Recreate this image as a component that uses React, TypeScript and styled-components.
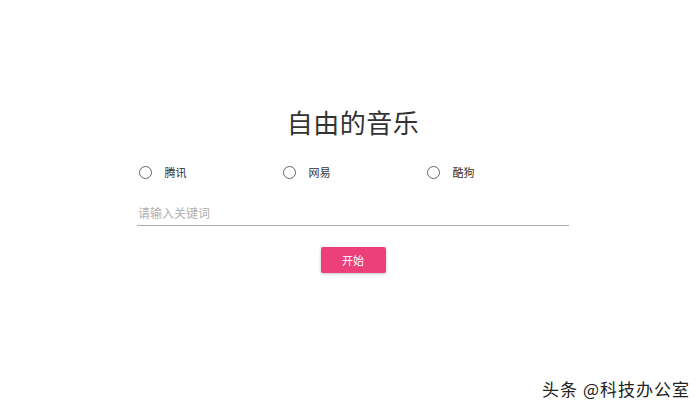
import React from 'react';
import styled, { createGlobalStyle } from 'styled-components';

const sources = ['腾讯', '网易', '酷狗'];

const GlobalStyle = createGlobalStyle`
  html, body {
    margin: 0;
    padding: 0;
    background: #fff;
    font-family: "Noto Sans CJK SC", "Liberation Sans", sans-serif;
  }
`;

const SPage = styled.div`
  position: relative;
  width: 700px;
  height: 409px;
  overflow: hidden;
  background: #fff;
`;

const SForm = styled.div`
  width: 432px;
  margin-left: 137px;
  padding-top: 104px;
  display: flex;
  flex-direction: column;
  align-items: center;
`;

const STitle = styled.h1`
  margin: 0;
  font-size: 26px;
  font-weight: 400;
  line-height: 36px;
  color: #333;
  letter-spacing: 0.5px;
`;

const SRadioRow = styled.div`
  width: 100%;
  margin-top: 22px;
  padding-left: 3px;
  display: grid;
  grid-template-columns: repeat(3, 144px);
`;

const SRadio = styled.label`
  display: flex;
  align-items: center;
  gap: 13px;
  font-size: 11px;
  color: #333;
  height: 20px;
`;

const SCircle = styled.span`
  width: 11px;
  height: 11px;
  border: 1.5px solid #666;
  border-radius: 50%;
`;

const SInput = styled.input`
  width: 100%;
  box-sizing: border-box;
  margin-top: 23px;
  padding: 0 1px 4px;
  border: none;
  border-bottom: 1px solid #aaa;
  outline: none;
  font-family: inherit;
  font-size: 12px;
  line-height: 16px;
  color: #333;
  background: transparent;
  &::placeholder {
    color: #b0b0b0;
  }
`;

const SButton = styled.button`
  margin-top: 21px;
  width: 65px;
  height: 26px;
  border: none;
  border-radius: 2px;
  background: #ec407a;
  color: #fff;
  font-family: inherit;
  font-size: 11px;
  box-shadow: 0 1px 3px rgba(0, 0, 0, 0.25);
`;

const SWatermark = styled.div`
  position: absolute;
  right: 10px;
  bottom: 8px;
  font-size: 17px;
  color: #222;
  letter-spacing: 1px;
`;

const App = () => {
  return (
    <>
      <GlobalStyle />
      <SPage>
        <SForm>
          <STitle>自由的音乐</STitle>
          <SRadioRow>
            {sources.map((name) => (
              <SRadio key={name}>
                <SCircle />
                {name}
              </SRadio>
            ))}
          </SRadioRow>
          <SInput placeholder="请输入关键词" />
          <SButton>开始</SButton>
        </SForm>
        <SWatermark>头条 @科技办公室</SWatermark>
      </SPage>
    </>
  );
};

export default App;
